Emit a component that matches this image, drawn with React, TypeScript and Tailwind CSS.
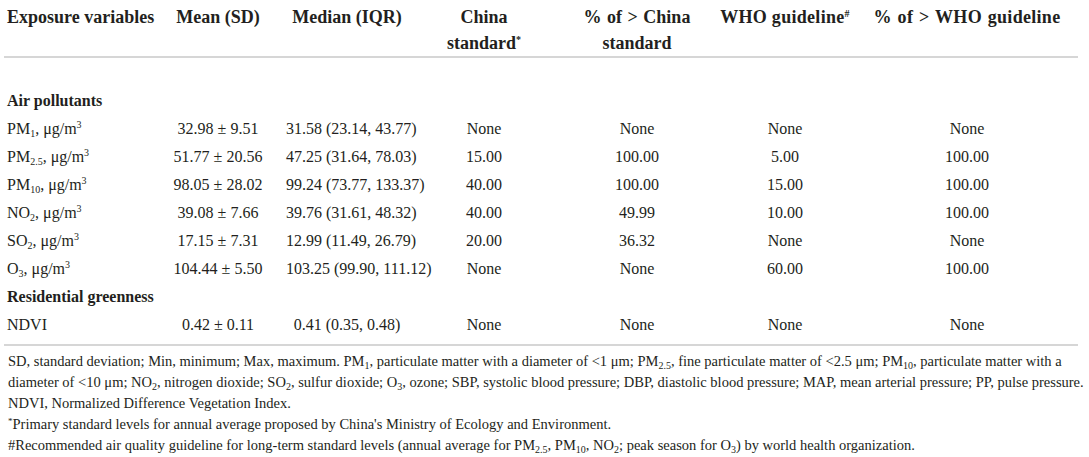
const rows = [
  { name: ["PM", "1"], mean: "32.98 ± 9.51", median: "31.58 (23.14, 43.77)", cn: "None", pcn: "None", who: "None", pwho: "None" },
  { name: ["PM", "2.5"], mean: "51.77 ± 20.56", median: "47.25 (31.64, 78.03)", cn: "15.00", pcn: "100.00", who: "5.00", pwho: "100.00" },
  { name: ["PM", "10"], mean: "98.05 ± 28.02", median: "99.24 (73.77, 133.37)", cn: "40.00", pcn: "100.00", who: "15.00", pwho: "100.00" },
  { name: ["NO", "2"], mean: "39.08 ± 7.66", median: "39.76 (31.61, 48.32)", cn: "40.00", pcn: "49.99", who: "10.00", pwho: "100.00" },
  { name: ["SO", "2"], mean: "17.15 ± 7.31", median: "12.99 (11.49, 26.79)", cn: "20.00", pcn: "36.32", who: "None", pwho: "None" },
  { name: ["O", "3"], mean: "104.44 ± 5.50", median: "103.25 (99.90, 111.12)", cn: "None", pcn: "None", who: "60.00", pwho: "100.00" },
];

function Sub({ children }: { children: React.ReactNode }) {
  return <sub className="text-[10px] leading-none align-baseline relative top-[3px]">{children}</sub>;
}

function Sup({ children }: { children: React.ReactNode }) {
  return <sup className="text-[10px] leading-none align-baseline relative top-[-6px]">{children}</sup>;
}

export default function App() {
  return (
    <div className="w-[1089px] h-[457px] bg-white text-[#231f20] font-['Liberation_Serif',serif] px-[4px] pt-[4px]">
      <table className="table-fixed border-collapse w-[1074px] text-[16px] leading-[20px] whitespace-nowrap">
        <colgroup>
          <col className="w-[146px]" />
          <col className="w-[136px]" />
          <col className="w-[122px]" />
          <col className="w-[152px]" />
          <col className="w-[154px]" />
          <col className="w-[142px]" />
          <col className="w-[222px]" />
        </colgroup>
        <thead>
          <tr className="border-b-2 border-[#d6d6d6] align-top text-[18px] font-bold leading-[26px]">
            <th className="text-left pl-[3px] pb-[6px]">Exposure variables</th>
            <th className="text-center">Mean (SD)</th>
            <th className="text-center">Median (IQR)</th>
            <th className="text-center">
              China
              <br />
              standard<Sup>*</Sup>
            </th>
            <th className="text-center [word-spacing:1px]">
              % of &gt; China
              <br />
              standard
            </th>
            <th className="text-center tracking-[0.3px]">
              WHO guideline<Sup>#</Sup>
            </th>
            <th className="text-center tracking-[0.3px] [word-spacing:1px]">% of &gt; WHO guideline</th>
          </tr>
        </thead>
        <tbody>
          <tr className="h-[30px]" />
          <tr className="h-[28px]">
            <td colSpan={7} className="pl-[3px] font-bold">Air pollutants</td>
          </tr>
          {rows.map((r) => (
            <tr key={r.name.join("")} className="h-[28px]">
              <td className="pl-[3px]">
                {r.name[0]}
                <Sub>{r.name[1]}</Sub>, μg/m<Sup>3</Sup>
              </td>
              <td className="text-center">{r.mean}</td>
              <td className="text-center">{r.median}</td>
              <td className="text-center">{r.cn}</td>
              <td className="text-center">{r.pcn}</td>
              <td className="text-center">{r.who}</td>
              <td className="text-center">{r.pwho}</td>
            </tr>
          ))}
          <tr className="h-[28px]">
            <td colSpan={7} className="pl-[3px] font-bold">Residential greenness</td>
          </tr>
          <tr className="h-[34px] border-b-2 border-[#d6d6d6] align-top">
            <td className="pl-[3px] pt-[4px]">NDVI</td>
            <td className="text-center pt-[4px]">0.42 ± 0.11</td>
            <td className="text-center pt-[4px]">0.41 (0.35, 0.48)</td>
            <td className="text-center pt-[4px]">None</td>
            <td className="text-center pt-[4px]">None</td>
            <td className="text-center pt-[4px]">None</td>
            <td className="text-center pt-[4px]">None</td>
          </tr>
        </tbody>
      </table>
      <div className="pl-[4px] pt-[5px] text-[14.5px] leading-[21px]">
        <p>
          SD, standard deviation; Min, minimum; Max, maximum. PM<Sub>1</Sub>, particulate matter with a diameter of
          &lt;1 μm; PM<Sub>2.5</Sub>, fine particulate matter of &lt;2.5 μm; PM<Sub>10</Sub>, particulate matter with a
          diameter of &lt;10 μm; NO<Sub>2</Sub>, nitrogen dioxide; SO<Sub>2</Sub>, sulfur dioxide; O<Sub>3</Sub>, ozone;
          SBP, systolic blood pressure; DBP, diastolic blood pressure; MAP, mean arterial pressure; PP, pulse pressure.
          NDVI, Normalized Difference Vegetation Index.
        </p>
        <p>
          <span className="text-[9px] leading-none align-baseline relative top-[-5px]">*</span>Primary standard levels
          for annual average proposed by China's Ministry of Ecology and Environment.
        </p>
        <p>
          #Recommended air quality guideline for long-term standard levels (annual average for PM<Sub>2.5</Sub>, PM
          <Sub>10</Sub>, NO<Sub>2</Sub>; peak season for O<Sub>3</Sub>) by world health organization.
        </p>
      </div>
    </div>
  );
}
